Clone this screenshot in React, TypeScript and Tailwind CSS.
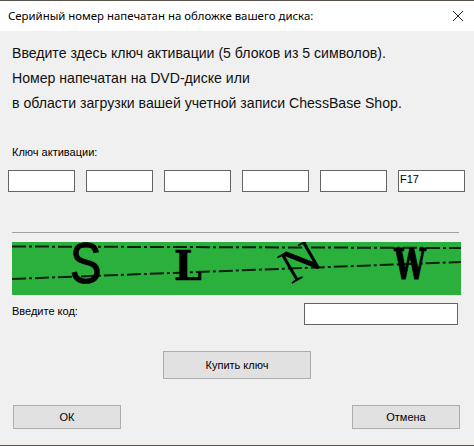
const keyBlocks = ['', '', '', '', '', 'F17'];

function Captcha() {
  return (
    <svg width="449" height="53" viewBox="0 0 449 53" className="block bg-[#2bb03e]">
      <g stroke="#0a200d" strokeWidth="2" strokeDasharray="14 3 3 3" fill="none">
        <path d="M0 4.5 L449 6" />
        <path d="M0 37 L449 20" />
      </g>
      <g fontFamily="'DejaVu Serif', serif" fill="#000" stroke="#000">
        <text transform="translate(74 41) scale(1.5 1.72)" fontFamily="'Liberation Mono', monospace" fontSize="36" strokeWidth="0.3" textAnchor="middle">S</text>
        <text transform="translate(176 38) scale(1.1 1.15)" fontSize="36" fontWeight="700" strokeWidth="0.5" textAnchor="middle">L</text>
        <text transform="translate(288 19) rotate(-30) scale(1.5 1.3)" fontFamily="'Liberation Serif', serif" fontSize="36" strokeWidth="0.2" textAnchor="middle" y="12">N</text>
        <text transform="translate(398 37) scale(0.78 1.2)" fontSize="36" fontWeight="700" strokeWidth="1" textAnchor="middle">W</text>
      </g>
    </svg>
  );
}

function DialogButton({ label, className }: { label: string; className: string }) {
  return (
    <button className={`h-[24px] bg-[#e1e1e1] border border-[#adadad] text-[11px] text-black ${className}`}>
      {label}
    </button>
  );
}

export default function App() {
  return (
    <div className="w-[474px] h-[446px] flex flex-col bg-[#f0f0f0] text-black overflow-hidden font-['Liberation_Sans',sans-serif]">
      <div className="h-[1px] bg-[#5a524c]" />
      <div className="h-[30px] bg-white flex items-center justify-between pl-[8px] pr-[10px]">
        <span className="text-[11.4px] font-['Noto_Sans',sans-serif]">Серийный номер напечатан на обложке вашего диска:</span>
        <svg width="12" height="12" viewBox="0 0 12 12" stroke="#222" fill="none">
          <path d="M1 1 L11 11 M11 1 L1 11" />
        </svg>
      </div>

      <div className="pl-[12px] pt-[10px] text-[14.1px] leading-[25px] text-[#111]">
        <p>Введите здесь ключ активации (5 блоков из 5 символов).</p>
        <p>Номер напечатан на DVD-диске или</p>
        <p>в области загрузки вашей учетной записи ChessBase Shop.</p>
      </div>

      <label className="pl-[12px] mt-[30px] text-[11px] leading-[13px]">Ключ активации:</label>

      <div className="flex gap-[11px] pl-[8px] mt-[11px]">
        {keyBlocks.map((value, i) => (
          <div
            key={i}
            className="w-[67px] h-[22px] bg-white border border-[#646464] pl-[1px] text-[11px] leading-[16px]"
          >
            {value}
          </div>
        ))}
      </div>

      <div className="ml-[12px] w-[447px] h-[1px] mt-[40px] bg-[#a0a0a0]" />

      <div className="ml-[12px] mt-[9px]">
        <Captcha />
      </div>

      <div className="flex justify-between mt-[8px] pl-[12px] pr-[16px]">
        <span className="text-[11px] leading-[13px] mt-[2px]">Введите код:</span>
        <div className="w-[154px] h-[22px] bg-white border border-[#646464]" />
      </div>

      <div className="flex justify-center mt-[26px]">
        <button className="w-[148px] h-[28px] bg-[#e1e1e1] border border-[#adadad] text-[11px] text-black">
          Купить ключ
        </button>
      </div>

      <div className="flex justify-between mt-[26px] pl-[13px] pr-[14px]">
        <DialogButton label="ОК" className="w-[108px]" />
        <DialogButton label="Отмена" className="w-[108px]" />
      </div>

      <div className="mt-auto h-[1px] bg-[#5a524c]" />
    </div>
  );
}
